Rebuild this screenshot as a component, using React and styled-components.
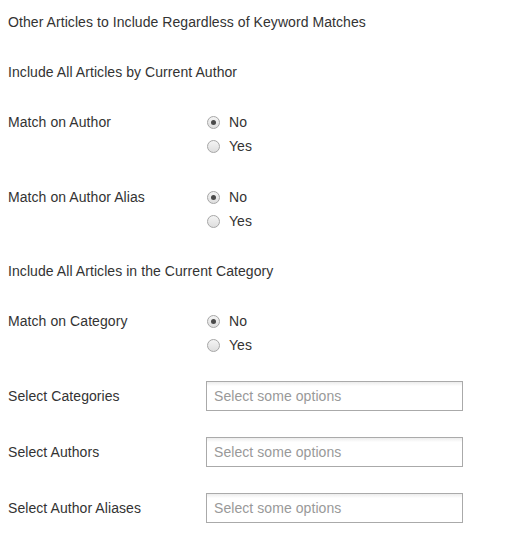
import React from "react";
import styled, { createGlobalStyle } from "styled-components";

const GlobalStyle = createGlobalStyle`
  body {
    margin: 0;
    background: #fff;
    font-family: "Liberation Sans", Arial, sans-serif;
    font-size: 14px;
    letter-spacing: 0.07px;
    color: #333;
  }
`;

const Page = styled.div`
  width: 508px;
  padding: 12px 0 0 8px;
  box-sizing: border-box;
`;

const Heading = styled.div`
  line-height: 20px;
  margin-bottom: 30px;
`;

const Row = styled.div`
  display: grid;
  grid-template-columns: 198px 1fr;
  align-items: ${(p) => (p.center ? "center" : "start")};
  margin-bottom: ${(p) => p.gap ?? 30}px;
`;

const Label = styled.div`
  line-height: 20px;
`;

const RadioGroup = styled.div`
  display: flex;
  flex-direction: column;
  gap: 4px;
`;

const Option = styled.label`
  display: flex;
  align-items: center;
  gap: 9px;
  line-height: 20px;
  padding-left: 1px;
`;

const Dot = styled.span`
  width: 11px;
  height: 11px;
  border-radius: 50%;
  border: 1px solid #a6a6a6;
  background: linear-gradient(#f4f4f4, #dedede);
  display: flex;
  align-items: center;
  justify-content: center;
  flex: none;

  &::after {
    content: "";
    width: 5px;
    height: 5px;
    border-radius: 50%;
    background: #4a4a4a;
    display: ${(p) => (p.checked ? "block" : "none")};
  }
`;

const Choices = styled.div`
  width: 257px;
  height: 30px;
  box-sizing: border-box;
  border: 1px solid #aaa;
  background: linear-gradient(#eee 1%, #fff 15%);
  display: flex;
  align-items: center;
  padding-left: 7px;
  color: #999;
  font-size: 14px;
`;

const Radios = ({ value }) => (
  <RadioGroup>
    <Option>
      <Dot checked={value === "no"} />
      No
    </Option>
    <Option>
      <Dot checked={value === "yes"} />
      Yes
    </Option>
  </RadioGroup>
);

const SelectRow = ({ label }) => (
  <Row center gap={26}>
    <Label>{label}</Label>
    <Choices>Select some options</Choices>
  </Row>
);

const App = () => (
  <>
    <GlobalStyle />
    <Page>
      <Heading>Other Articles to Include Regardless of Keyword Matches</Heading>
      <Heading>Include All Articles by Current Author</Heading>
      <Row gap={31}>
        <Label>Match on Author</Label>
        <Radios value="no" />
      </Row>
      <Row>
        <Label>Match on Author Alias</Label>
        <Radios value="no" />
      </Row>
      <Heading>Include All Articles in the Current Category</Heading>
      <Row gap={26}>
        <Label>Match on Category</Label>
        <Radios value="no" />
      </Row>
      <SelectRow label="Select Categories" />
      <SelectRow label="Select Authors" />
      <SelectRow label="Select Author Aliases" />
    </Page>
  </>
);

export default App;
